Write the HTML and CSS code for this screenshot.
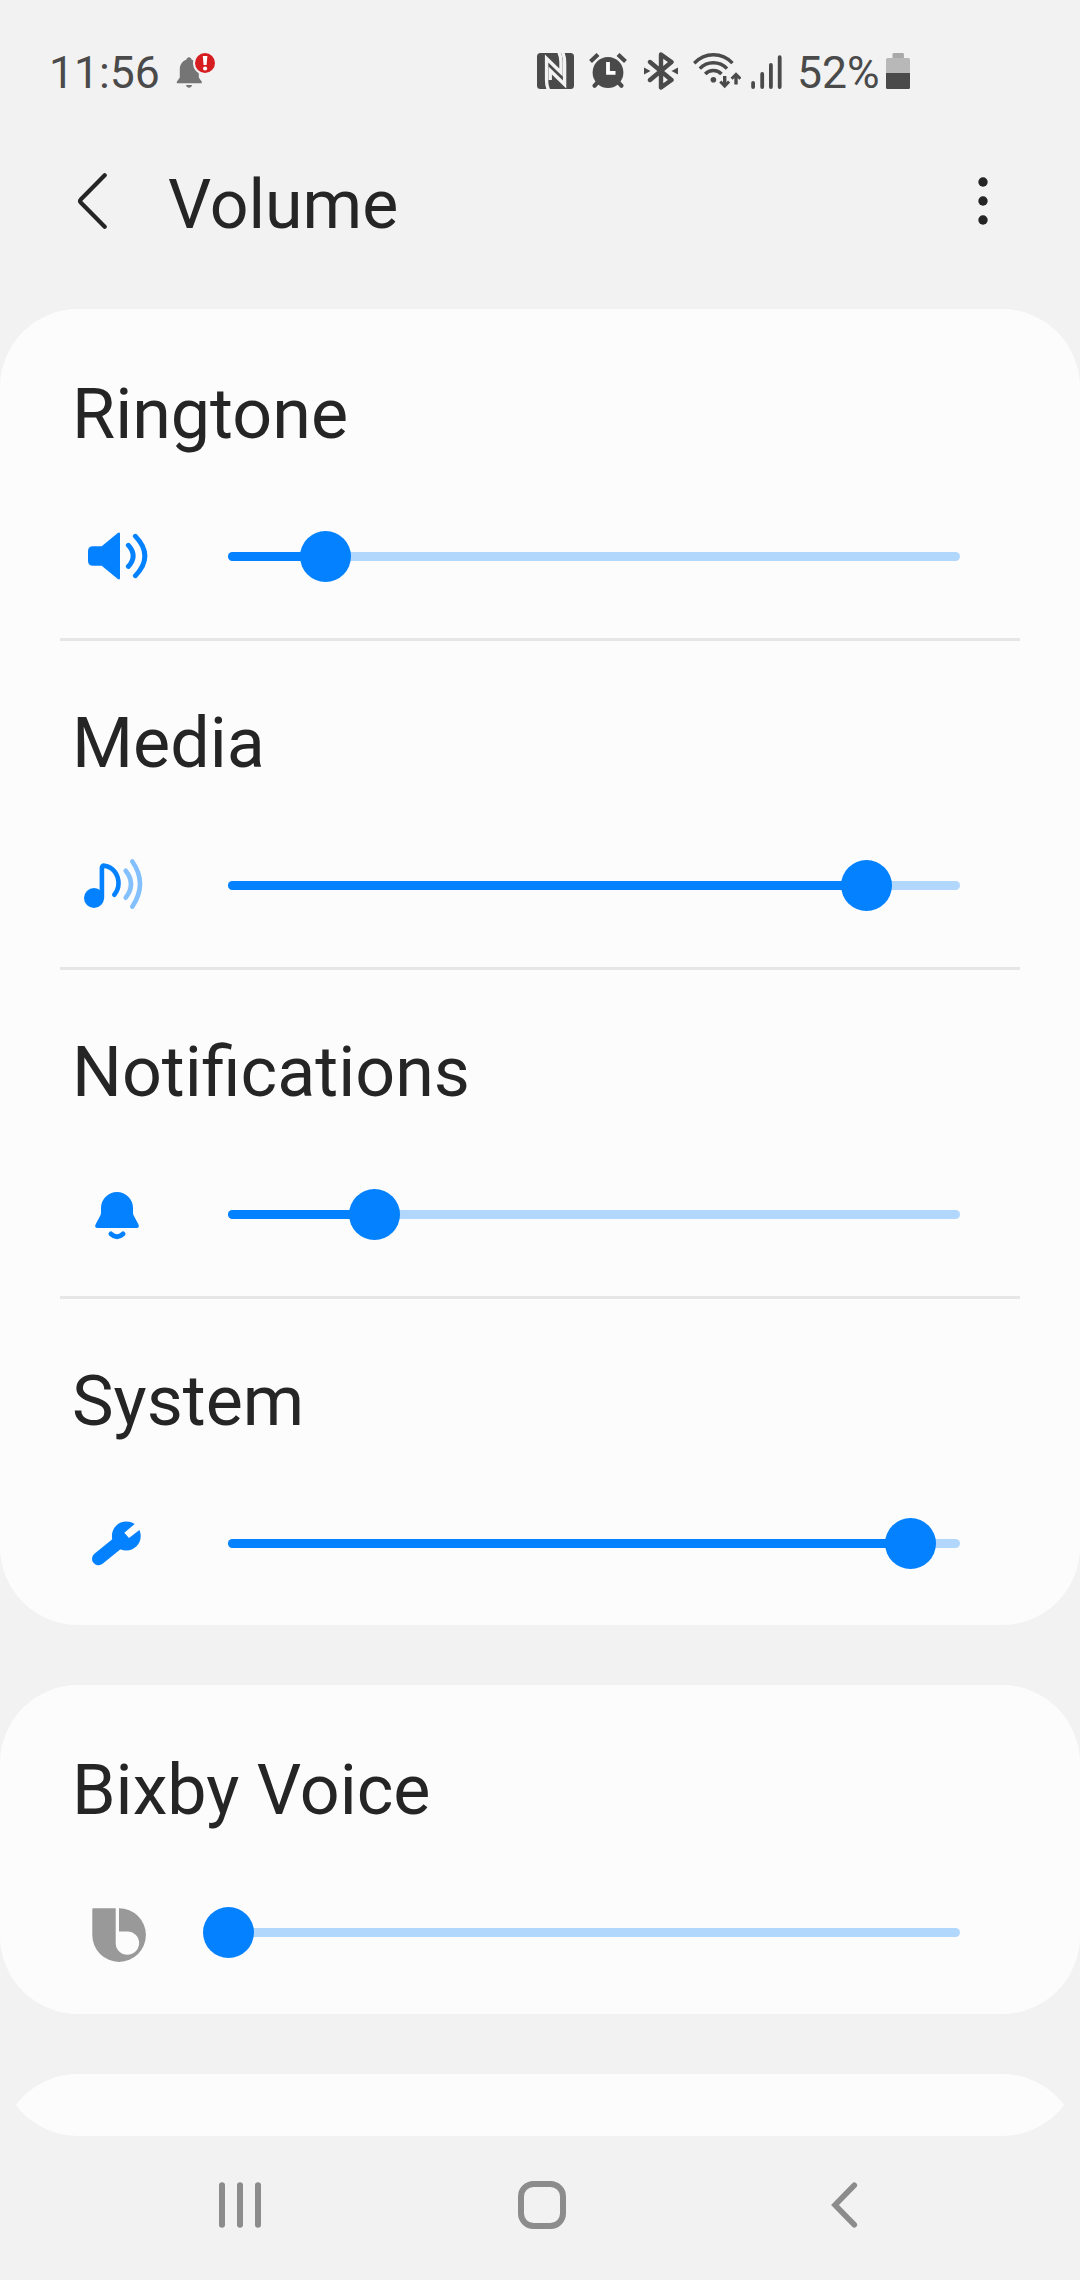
FILE: index.html
```html
<!DOCTYPE html>
<html lang="en">
<head>
  <meta charset="UTF-8">
  <title>Volume</title>
  <link rel="stylesheet" href="styles.css">
</head>
<body>

  <div class="status-bar">
    <span class="clock">11:56</span>
    <svg class="alert-icon" width="40" height="36" viewBox="0 0 40 36">
      <path fill="#757575" d="M13 4.3c1.4 0 2.3 1 2.5 2.2 4.5 1.6 7.3 5 7.3 9.800v8.200l3 4.300v1.500H.8v-1.500l3-4.300v-8.200c0-4.800 2.600-8.200 6.700-9.800.2-1.200 1.100-2.200 2.500-2.200z"/>
      <path fill="#757575" d="M10 32h6c-.3 1.800-1.500 2.800-3 2.800s-2.700-1-3-2.800z"/>
      <circle cx="29" cy="10" r="12" fill="#f2f2f2"/>
      <circle cx="29" cy="10" r="10" fill="#d61d20"/>
      <path fill="#fff" d="M26.800 3h4.600l-.8 9h-3z"/>
      <circle cx="29.100" cy="15.500" r="2.100" fill="#fff"/>
    </svg>

    <div class="status-icons">
      <!-- nfc -->
      <svg width="37" height="36" viewBox="0 0 37 36">
        <rect width="37" height="36" rx="3.500" fill="#4a4a4a"/>
        <path fill="none" stroke="#f2f2f2" stroke-width="3.400" d="M11.500 36.500C10 34 9.600 31 9.600 27V5.500L24 19.500V9C24 5 23.500 2.500 22-.5"/>
        <path fill="none" stroke="#f2f2f2" stroke-width="3.400" d="M25.700-.5C27.300 3 27.600 6 27.600 10V31.500L13.200 17.500V27"/>
      </svg>
      <!-- alarm -->
      <svg class="alarm" width="38" height="36" viewBox="0 0 38 36">
        <g stroke="#4a4a4a" stroke-width="4.200">
          <path d="M1.500 8.500l7.500-7M36.500 8.500l-7.500-7"/>
          <path stroke-linecap="round" d="M9.500 28.500l-4 4.300M28.500 28.500l4 4.300"/>
        </g>
        <circle cx="19" cy="19.500" r="15.400" fill="#4a4a4a"/>
        <path fill="none" stroke="#fff" stroke-width="3.800" d="M19 9v10.800h7.500"/>
      </svg>
      <!-- bluetooth -->
      <svg class="bluetooth" width="34" height="38" viewBox="0 0 34 38">
        <path fill="none" stroke="#4a4a4a" stroke-width="4.400" stroke-linejoin="round" stroke-linecap="round" d="M6 10l21.500 18L17 35.500V2.500L27.500 10 6 28"/>
        <path fill="#4a4a4a" d="M0 15.500l6.500 3.500L0 22.500zM34 15.500L27.500 19l6.500 3.500z"/>
      </svg>
      <!-- wifi -->
      <svg class="wifi" width="48" height="36" viewBox="0 0 48 36">
        <g fill="none" stroke="#4a4a4a" stroke-width="3.400">
          <path d="M1.200 10.200C6.500 4.800 12.500 1.800 20.300 1.800S34.500 4.800 39.500 10.200"/>
          <path d="M6.800 15.700C10.500 11.800 14.800 9.800 20.300 9.800S30.300 11.800 34 15.700"/>
          <path d="M12.200 21C14.500 18.600 17 17.500 20.300 17.500S26.300 18.600 28.500 21"/>
          <path stroke-width="3.400" d="M31.700 23v9M43 31.500v-9"/>
        </g>
        <circle cx="20.400" cy="26.700" r="2.800" fill="#4a4a4a"/>
        <path fill="none" stroke="#4a4a4a" stroke-width="3" d="M27.300 28.500l4.400 4.500 4.400-4.500M38.600 25.800l4.400-4.500 4.400 4.500"/>
      </svg>
      <!-- signal -->
      <svg class="signal" width="31" height="36" viewBox="0 0 31 36">
        <path stroke="#4a4a4a" stroke-width="3.800" stroke-linecap="round" d="M2.100 30v4M11.200 21v13M19.900 12v22M28.700 4.200v29.800"/>
      </svg>
      <span class="percent">52%</span>
      <svg class="battery" width="24" height="36" viewBox="0 0 24 36">
        <path fill="#a9a9a9" d="M6.500 5V1.300Q6.500 0 7.800 0h8.800q1.300 0 1.300 1.300V5z"/>
        <path fill="#b8b8b8" d="M0 20V6.500Q0 5 1.500 5h21q1.500 0 1.500 1.500V20z"/>
        <path fill="#4a4a4a" d="M0 20h24v14.500q0 1.500-1.500 1.500h-21Q0 36 0 34.500z"/>
      </svg>
    </div>
  </div>

  <div class="header">
    <svg class="back" width="32" height="60" viewBox="0 0 32 60">
      <path fill="none" stroke="#252525" stroke-width="4.200" stroke-linecap="round" stroke-linejoin="round" d="M27.700 4.300L4 28.200q-1.800 1.800 0 3.600L27.700 55.700"/>
    </svg>
    <h1>Volume</h1>
    <svg class="more" width="10" height="50" viewBox="0 0 10 50">
      <circle cx="5" cy="6" r="4.700" fill="#252525"/>
      <circle cx="5" cy="25" r="4.700" fill="#252525"/>
      <circle cx="5" cy="44" r="4.700" fill="#252525"/>
    </svg>
  </div>

  <div class="content">
    <div class="card">
      <div class="row">
        <h2>Ringtone</h2>
        <div class="control">
          <svg width="72" height="72" viewBox="0 0 72 72">
            <path fill="#0381fe" d="M12 26.300h8.700L36.800 13q2.200-1.200 2.200.7v44.600q0 1.900-2.200.7L20.700 45.700H12q-5 0-5-5v-9.400q0-5 5-5z"/>
            <path fill="none" stroke="#0381fe" stroke-width="4.800" stroke-linecap="round" d="M47.300 25.200Q57 36 47.300 46.500M54.300 16.200Q73.400 36 54.300 55.800"/>
          </svg>
          <div class="slider">
            <div class="fill" style="width: 13.3%"></div>
            <div class="thumb" style="left: 13.3%"></div>
          </div>
        </div>
      </div>

      <div class="row">
        <h2>Media</h2>
        <div class="control">
          <svg width="72" height="72" viewBox="0 0 72 72">
            <circle cx="13" cy="49" r="10" fill="#0381fe"/>
            <g fill="none" stroke-width="4.600" stroke-linecap="round">
              <path stroke="#0381fe" d="M20.900 49V19q0-2.600 2.600-2.300C32.500 18 37.500 26 37.500 34.300c0 4.700-1.500 8.200-4.200 11.500"/>
              <path stroke="#84c0fd" d="M44.700 21.700Q55.300 35 44.700 48.700M51.300 12.500Q66.700 34.500 51.300 57.700"/>
            </g>
          </svg>
          <div class="slider">
            <div class="fill" style="width: 87.2%"></div>
            <div class="thumb" style="left: 87.2%"></div>
          </div>
        </div>
      </div>

      <div class="row">
        <h2>Notifications</h2>
        <div class="control">
          <svg width="72" height="72" viewBox="0 0 72 72">
            <path fill="#0381fe" d="M20 30a16 16 0 0 1 32 0v4.700q0 1.500.7 2.700l4.500 8.600q2 4-2 4H16.800q-4 0-2-4l4.500-8.600q.7-1.200.7-2.700z"/>
            <path fill="none" stroke="#0381fe" stroke-width="5" stroke-linecap="round" d="M30 56q6 5.500 12 0"/>
          </svg>
          <div class="slider">
            <div class="fill" style="width: 20%"></div>
            <div class="thumb" style="left: 20%"></div>
          </div>
        </div>
      </div>

      <div class="row">
        <h2>System</h2>
        <div class="control">
          <svg width="72" height="72" viewBox="0 0 72 72">
            <circle cx="45.300" cy="29" r="14.400" fill="#0381fe"/>
            <path stroke="#0381fe" stroke-width="13" stroke-linecap="round" d="M17.500 51.700L40 33.500"/>
            <path fill="#fcfcfc" d="M43.300 25.700l4.700 5.300L62 20.200l-5-6z"/>
          </svg>
          <div class="slider">
            <div class="fill" style="width: 93.2%"></div>
            <div class="thumb" style="left: 93.2%"></div>
          </div>
        </div>
      </div>
    </div>

    <div class="card">
      <div class="row">
        <h2>Bixby Voice</h2>
        <div class="control">
          <svg width="72" height="72" viewBox="0 0 72 72">
            <path fill="#999" d="M12.300 12.300H38A26.800 26.800 0 1 1 11.300 39V13.300q0-1 1-1z"/>
            <path fill="#fcfcfc" d="M34.700 11v36.300a11.700 11.700 0 1 0 11.700-11.900H38V11z"/>
          </svg>
          <div class="slider">
            <div class="fill" style="width: 0%"></div>
            <div class="thumb" style="left: 0%"></div>
          </div>
        </div>
      </div>
    </div>

    <!-- next card, cut off by the nav bar -->
    <div class="card">
      <div class="row"></div>
    </div>
  </div>

  <div class="nav-bar">
    <div class="nav-item">
      <svg width="48" height="48" viewBox="0 0 48 48">
        <path stroke="#8c8c8c" stroke-width="6" stroke-linecap="round" d="M6 4.300v39.400M24 4.300v39.400M42 4.300v39.400"/>
      </svg>
    </div>
    <div class="nav-item">
      <svg width="48" height="48" viewBox="0 0 48 48">
        <rect x="3" y="3" width="42" height="42" rx="12.500" fill="none" stroke="#8c8c8c" stroke-width="6"/>
      </svg>
    </div>
    <div class="nav-item">
      <svg width="28" height="48" viewBox="0 0 28 48">
        <path fill="none" stroke="#8c8c8c" stroke-width="5.600" stroke-linecap="round" d="M24.300 4.300L5 24l19.300 19.700"/>
      </svg>
    </div>
  </div>

</body>
</html>
```

FILE: styles.css
```css
* {
  box-sizing: border-box;
}

body {
  width: 1080px;
  height: 2280px;
  margin: 0;
  background: #f2f2f2;
  color: #252525;
  font-family: Roboto, "Liberation Sans", sans-serif;
  display: flex;
  flex-direction: column;
  overflow: hidden;
}

svg {
  display: block;
  flex: none;
}

h1, h2 {
  margin: 0;
  font-weight: 400;
  font-size: 70px;
  line-height: 80px;
}

/* status bar */
.status-bar {
  height: 142px;
  padding: 0 170px 0 49px;
  display: flex;
  align-items: center;
  font-size: 44.5px;
  line-height: 54px;
  color: #4a4a4a;
}

.clock {
  width: 127px;
  padding-top: 3px;
}

.status-icons {
  margin-left: auto;
  display: flex;
  align-items: center;
}

.alarm {
  margin-left: 15px;
}

.bluetooth {
  margin-left: 17px;
}

.wifi {
  margin-left: 15px;
}

.signal {
  margin-left: 10px;
}

.percent {
  width: 89px;
  margin-left: 15px;
  padding-top: 3px;
}

/* header */
.header {
  height: 118px;
  margin-bottom: 49px;
  padding: 0 92px 0 77px;
  display: flex;
  align-items: center;
}

.header h1 {
  margin-left: 59px;
  padding-top: 8px;
  font-size: 68px;
}

.more {
  margin-left: auto;
}

/* cards */
.content {
  height: 1827px;
  display: flex;
  flex-direction: column;
  gap: 60px;
  border-radius: 0 0 78px 78px;
  overflow: hidden;
}

.card {
  flex: none;
  padding: 0 60px;
  background: #fcfcfc;
  border-radius: 78px;
}

.row {
  height: 329px;
  padding: 62px 60px 0 12px;
  border-top: 3px solid transparent;
}

.row + .row {
  border-top-color: #e6e6e6;
}

.control {
  display: flex;
  align-items: center;
  margin-top: 66px;
  padding-left: 9px;
}

.slider {
  position: relative;
  flex: 1;
  height: 9px;
  margin: 1px 0 0 75px;
  border-radius: 5px;
  background: #b1d7fc;
}

.fill {
  height: 9px;
  border-radius: 5px;
  background: #0381fe;
}

.thumb {
  position: absolute;
  top: -21px;
  width: 51px;
  height: 51px;
  margin-left: -25px;
  border-radius: 50%;
  background: #0381fe;
}

/* navigation bar */
.nav-bar {
  height: 138px;
  padding-left: 89px;
  display: flex;
}

.nav-item {
  width: 302px;
  display: flex;
  align-items: center;
  justify-content: center;
}
```
